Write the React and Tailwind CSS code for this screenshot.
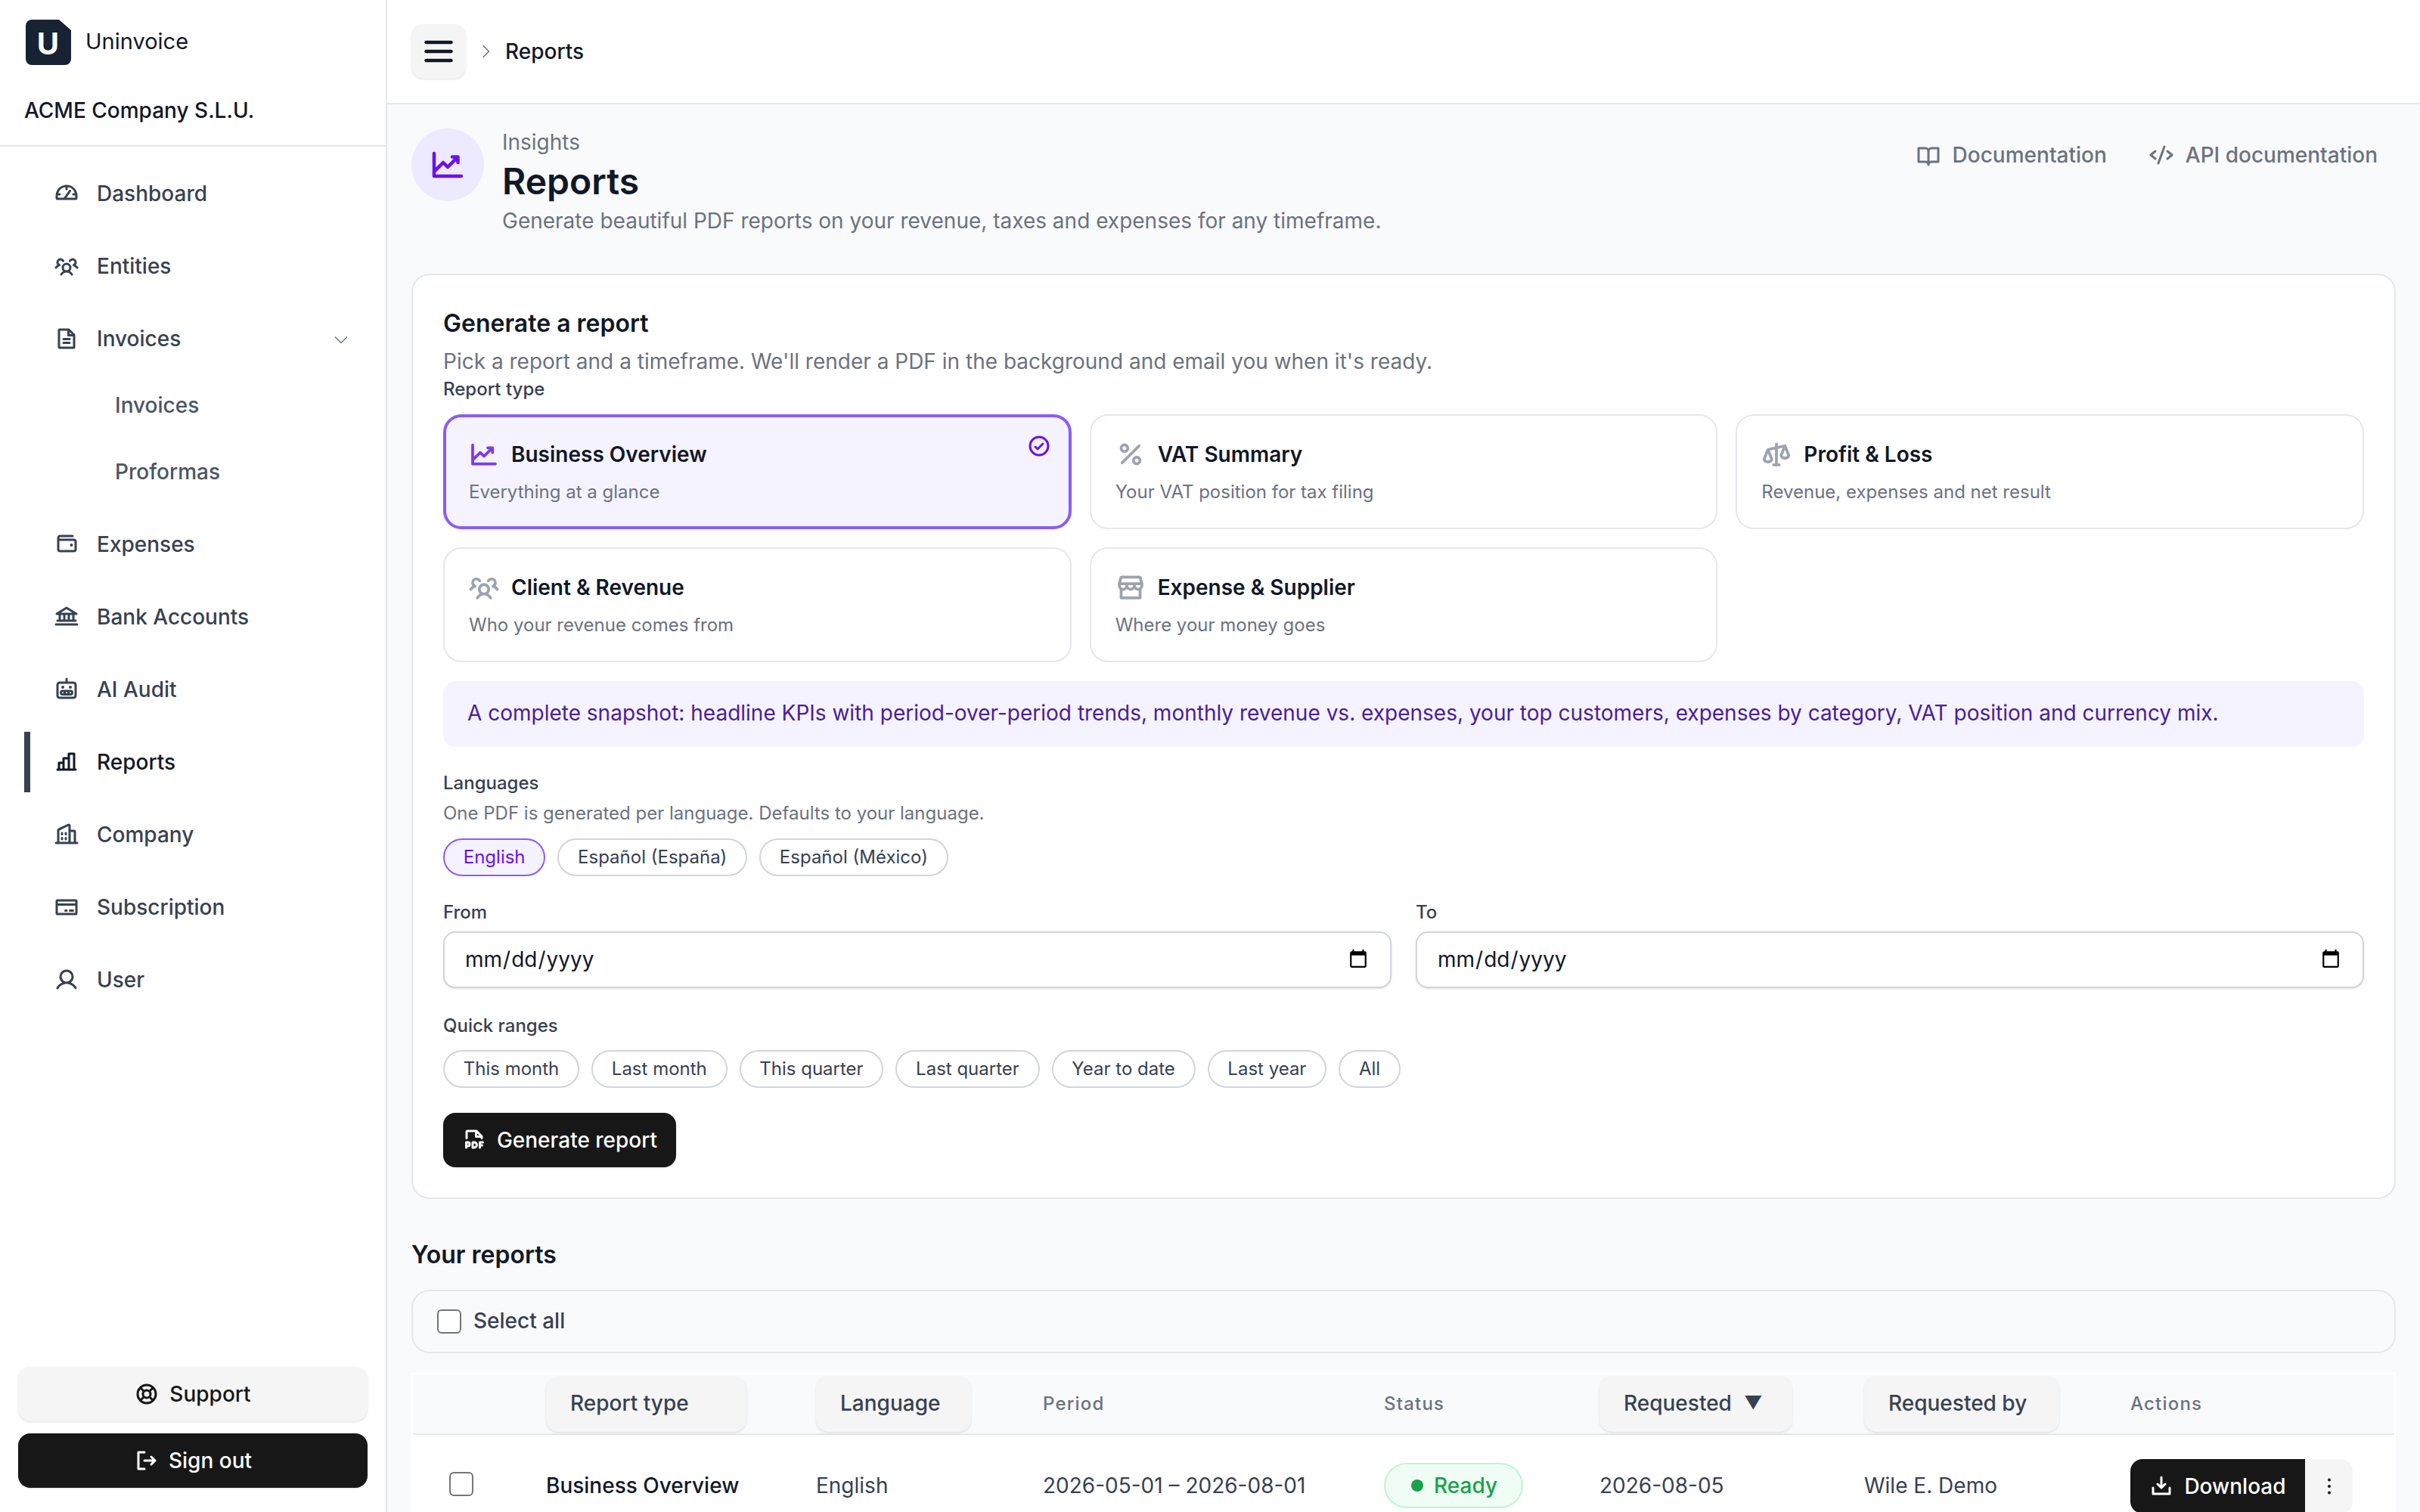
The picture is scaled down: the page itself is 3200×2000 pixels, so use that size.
import React from 'react';
import {
  PiGaugeBold, PiUsersThreeBold, PiFileTextBold, PiWalletBold, PiBankBold, PiRobotBold, PiChartBarBold, PiBuildingsBold,
  PiCreditCardBold, PiUserBold, PiCaretDown, PiCaretRight, PiListBold, PiChartLineUpBold, PiBookOpenBold, PiCodeBold,
  PiCheckCircleBold, PiPercentBold, PiScalesBold, PiStorefrontBold, PiFilePdfBold, PiDownloadSimpleBold,
  PiDotsThreeVerticalBold, PiLifebuoyBold, PiSignOutBold,
} from 'react-icons/pi';

const navItems = [
  { label: 'Dashboard', icon: PiGaugeBold },
  { label: 'Entities', icon: PiUsersThreeBold },
  { label: 'Invoices', icon: PiFileTextBold, open: true },
  { label: 'Expenses', icon: PiWalletBold },
  { label: 'Bank Accounts', icon: PiBankBold },
  { label: 'AI Audit', icon: PiRobotBold },
  { label: 'Reports', icon: PiChartBarBold, active: true },
  { label: 'Company', icon: PiBuildingsBold },
  { label: 'Subscription', icon: PiCreditCardBold },
  { label: 'User', icon: PiUserBold },
];

const reportTypes = [
  { title: 'Business Overview', desc: 'Everything at a glance', icon: PiChartLineUpBold, selected: true },
  { title: 'VAT Summary', desc: 'Your VAT position for tax filing', icon: PiPercentBold },
  { title: 'Profit & Loss', desc: 'Revenue, expenses and net result', icon: PiScalesBold },
  { title: 'Client & Revenue', desc: 'Who your revenue comes from', icon: PiUsersThreeBold },
  { title: 'Expense & Supplier', desc: 'Where your money goes', icon: PiStorefrontBold },
];

const ranges = ['This month', 'Last month', 'This quarter', 'Last quarter', 'Year to date', 'Last year', 'All'];

const Pill = ({ children, active }) => (
  <button
    className={`h-[50px] px-[24.75px] rounded-full border-2 text-[24px] leading-none ${
      active ? 'border-[#8b5cf6] bg-[#f5f3ff] text-[#6d11e6]' : 'border-[#d1d5db] bg-white text-[#374151]'
    }`}
  >
    {children}
  </button>
);

const HeadButton = ({ children, className }) => (
  <button
    className={`h-[73px] pl-[32px] pb-[3px] rounded-2xl bg-[#f5f5f5] shadow-sm text-[28px] font-medium text-[#374151] flex items-center gap-4 whitespace-nowrap ${className}`}
  >
    {children}
  </button>
);

const DateField = ({ label }) => (
  <div className="flex-1">
    <label className="block text-[24px] leading-[32px] font-medium text-[#374151] mb-[9px]">{label}</label>
    <input
      type="date"
      className="w-full h-[75px] px-[26px] pb-[2px] rounded-2xl border-2 border-[#d1d5db] bg-white shadow-sm text-[28px] text-[#111827]"
    />
  </div>
);

const Sidebar = () => (
  <aside className="w-[512px] h-full shrink-0 bg-white border-r-2 border-[#e5e7eb] flex flex-col">
    <div className="h-[194px] shrink-0 border-b-2 border-[#e5e7eb] px-[32px] pt-[26px]">
      <div className="flex items-center gap-[19px] h-[60px] pl-[2px]">
        <div className="relative w-[60px] h-[60px]">
          <svg viewBox="0 0 60 60" className="w-[60px] h-[60px]">
            <path d="M8 0H44L60 14V52a8 8 0 0 1-8 8H8a8 8 0 0 1-8-8V8a8 8 0 0 1 8-8z" fill="#172233" />
            <text x="29.5" y="46" textAnchor="middle" fontSize="40" fontWeight="700" fill="#fff">U</text>
          </svg>
        </div>
        <span className="text-[29px] leading-none text-[#111827] -mt-[3px]">Uninvoice</span>
      </div>
      <div className="mt-[42px] text-[28px] leading-[36px] font-medium text-[#111827]">ACME Company S.L.U.</div>
    </div>
    <nav className="flex-1 pt-[22px] pl-[32px] pr-[32px] flex flex-col gap-4">
      {navItems.map((item) => (
        <React.Fragment key={item.label}>
          <div
            className={`h-[80px] flex items-center pl-[32px] pr-[15px] gap-[24px] text-[28px] font-medium border-l-8 ${
              item.active ? 'border-[#374151] text-[#111827]' : 'border-transparent text-[#374151]'
            }`}
          >
            <item.icon className="w-8 h-8 shrink-0" />
            <span className="flex-1">{item.label}</span>
            {item.open && <PiCaretDown className="w-6 h-6 mt-[2px] text-[#6b7280]" />}
          </div>
          {item.open && (
            <div className="flex flex-col gap-4 -mt-1 mb-1">
              {['Invoices', 'Proformas'].map((sub) => (
                <div key={sub} className="h-[72px] flex items-center pl-[120px] text-[28px] font-medium text-[#4b5563]">
                  {sub}
                </div>
              ))}
            </div>
          )}
        </React.Fragment>
      ))}
    </nav>
    <div className="px-[24px] pb-[32px] flex flex-col gap-4">
      <button className="h-[72px] pb-[1px] rounded-2xl bg-[#f5f5f5] shadow-sm flex items-center justify-center gap-[14px] text-[28px] font-medium text-[#171717]">
        <PiLifebuoyBold className="w-8 h-8" />
        Support
      </button>
      <button className="h-[72px] rounded-2xl bg-[#171717] shadow-sm flex items-center justify-center gap-[14px] text-[28px] font-medium text-white">
        <PiSignOutBold className="w-8 h-8" />
        Sign out
      </button>
    </div>
  </aside>
);

const ReportCard = ({ title, desc, icon: Icon, selected }) => (
  <div
    className={`relative h-[152px] rounded-3xl px-[32px] pt-[31px] ${
      selected ? 'border-4 border-[#8b5cf6] bg-[#f5f3ff]' : 'border-2 border-[#e5e7eb] bg-white'
    }`}
  >
    <div className={`flex items-center gap-[16px] h-[40px] ${selected ? '-mt-[2px] -ml-[2px]' : ''}`}>
      <Icon className={`w-10 h-10 ${selected ? 'text-[#7c3aed]' : 'text-[#9ca3af]'}`} />
      <span className="text-[28px] font-semibold text-[#111827]">{title}</span>
    </div>
    <div className={`mt-[14px] text-[24px] leading-[32px] text-[#6b7280] ${selected ? '-ml-[2px]' : ''}`}>{desc}</div>
    {selected && <PiCheckCircleBold className="absolute top-[22px] right-[23px] w-8 h-8 text-[#6d11e6]" />}
  </div>
);

export default function App() {
  return (
    <div className="h-[2000px] w-[3200px] overflow-hidden flex bg-[#f9fafb] font-['Inter',sans-serif]">
      <Sidebar />
      <div className="flex-1 min-w-0 flex flex-col">
        <header className="h-[138px] shrink-0 bg-white border-b-2 border-[#e5e7eb] px-[32px] flex items-center gap-[14px]">
          <button className="w-[72px] h-[72px] rounded-2xl bg-[#f5f5f5] shadow-sm flex items-center justify-center">
            <PiListBold className="w-[48px] h-[48px] text-[#111827]" />
          </button>
          <PiCaretRight className="w-6 h-6 text-[#6b7280]" />
          <span className="text-[28px] font-medium text-[#111827] -mt-[1px]">Reports</span>
        </header>

        <main className="px-[32px] pt-[32px]">
          <div className="flex justify-between h-[192px]">
            <div className="flex gap-[24px]">
              <div className="w-[96px] h-[96px] rounded-full bg-[#ede9fe] flex items-center justify-center">
                <PiChartLineUpBold className="w-12 h-12 text-[#6d11e6]" />
              </div>
              <div>
                <div className="text-[28px] leading-[36px] text-[#6b7280]">Insights</div>
                <h1 className="text-[48px] leading-[68px] font-semibold text-[#111827]">Reports</h1>
                <p className="text-[28px] leading-[36px] text-[#6b7280]">
                  Generate beautiful PDF reports on your revenue, taxes and expenses for any timeframe.
                </p>
              </div>
            </div>
            <div className="flex gap-[56px] pr-[24px] pt-[10px] h-[60px] text-[28px] font-medium text-[#6b7280]">
              <a className="flex items-center gap-[16px]">
                <PiBookOpenBold className="w-8 h-8" />
                Documentation
              </a>
              <a className="flex items-center gap-[16px]">
                <PiCodeBold className="w-8 h-8" />
                API documentation
              </a>
            </div>
          </div>

          <section className="h-[1224px] rounded-3xl border-2 border-[#e5e7eb] bg-white p-[40px] pt-[44px]">
            <h2 className="text-[32px] leading-[40px] font-semibold text-[#111827]">Generate a report</h2>
            <p className="mt-[10px] text-[28px] leading-[40px] text-[#6b7280]">
              Pick a report and a timeframe. We'll render a PDF in the background and email you when it's ready.
            </p>
            <div className="text-[24px] leading-[32px] font-medium text-[#374151] mt-[1px] mb-[17px]">Report type</div>
            <div className="grid grid-cols-3 gap-[24px]">
              {reportTypes.map((r) => (
                <ReportCard key={r.title} {...r} />
              ))}
            </div>
            <div className="mt-[25px] h-[87px] rounded-2xl bg-[#f5f3ff] px-[32px] pb-[4px] flex items-center text-[28px] text-[#4c1d95]">
              A complete snapshot: headline KPIs with period-over-period trends, monthly revenue vs. expenses, your top customers, expenses by category, VAT position and currency mix.
            </div>

            <div className="mt-[32px] text-[24px] leading-[32px] font-medium text-[#374151]">Languages</div>
            <div className="mt-[8px] text-[24px] leading-[32px] text-[#6b7280]">One PDF is generated per language. Defaults to your language.</div>
            <div className="mt-[17px] flex gap-[16px]">
              <Pill active>English</Pill>
              <Pill>Español (España)</Pill>
              <Pill>Español (México)</Pill>
            </div>

            <div className="mt-[32px] flex gap-[32px]">
              <DateField label="From" />
              <DateField label="To" />
            </div>

            <div className="mt-[34px] text-[24px] leading-[32px] font-medium text-[#374151]">Quick ranges</div>
            <div className="mt-[16px] flex gap-[16px]">
              {ranges.map((r) => (
                <Pill key={r}>{r}</Pill>
              ))}
            </div>

            <button className="mt-[33px] h-[72px] w-[308px] rounded-2xl bg-[#171717] shadow-sm flex items-center justify-center gap-[14px] text-[28px] font-medium text-white">
              <PiFilePdfBold className="w-8 h-8" />
              Generate report
            </button>
          </section>

          <h2 className="mt-[54px] text-[32px] leading-[40px] font-semibold text-[#111827]">Your reports</h2>
          <div className="mt-[26px] h-[84px] rounded-3xl border-2 border-[#e5e7eb] px-[32px] flex items-center gap-[16px]">
            <input type="checkbox" className="appearance-none w-8 h-8 rounded-md border-2 border-[#767676] bg-white" />
            <span className="text-[28px] font-medium text-[#374151] -mt-[2px]">Select all</span>
          </div>

          <div className="mt-[26px] border-2 border-white bg-white">
            <div className="grid grid-cols-[176px_357px_300px_451px_285px_350px_352px_1fr] items-center h-[80px] bg-[#f9fafb] border-b-2 border-[#e5e7eb]">
              <div />
              <div><HeadButton className="w-[265px]">Report type</HeadButton></div>
              <div><HeadButton className="w-[205px]">Language</HeadButton></div>
              <div className="text-[24px] font-medium tracking-wider text-[#6b7280]">Period</div>
              <div className="text-[24px] font-medium tracking-wider text-[#6b7280]">Status</div>
              <div><HeadButton className="w-[255px]">Requested <span className="text-[24px]">▼</span></HeadButton></div>
              <div><HeadButton className="w-[258px]">Requested by</HeadButton></div>
              <div className="text-[24px] font-medium tracking-wider text-[#6b7280]">Actions</div>
            </div>
            <div className="grid grid-cols-[176px_357px_300px_451px_285px_350px_352px_1fr] items-start h-[130px] pt-[32px] text-[28px] text-[#374151]">
              <div className="pl-[48px] pt-[17px]">
                <input type="checkbox" className="block appearance-none w-8 h-8 rounded-md border-2 border-[#767676] bg-white" />
              </div>
              <div className="pt-[14px] font-medium text-[#111827]">Business Overview</div>
              <div className="pt-[14px]">English</div>
              <div className="pt-[14px]">2026-05-01 – 2026-08-01</div>
              <div className="pt-[5px]">
                <span className="inline-flex items-center gap-[14px] h-[60px] w-[184px] pl-[34px] rounded-full border-2 border-[#bbf7d0] bg-[#f0fdf4] font-medium text-[#16a34a]">
                  <span className="w-4 h-4 rounded-full bg-[#16a34a]" />
                  Ready
                </span>
              </div>
              <div className="pt-[14px]">2026-08-05</div>
              <div className="pt-[14px]">Wile E. Demo</div>
              <div className="flex">
                <button className="h-[72px] w-[231px] rounded-l-2xl bg-[#171717] flex items-center justify-center gap-[14px] font-medium text-white">
                  <PiDownloadSimpleBold className="w-8 h-8" />
                  Download
                </button>
                <button className="h-[72px] w-[63px] rounded-r-2xl bg-[#f5f5f5] flex items-center justify-center">
                  <PiDotsThreeVerticalBold className="w-8 h-8 text-[#171717]" />
                </button>
              </div>
            </div>
          </div>
        </main>
      </div>
    </div>
  );
}
